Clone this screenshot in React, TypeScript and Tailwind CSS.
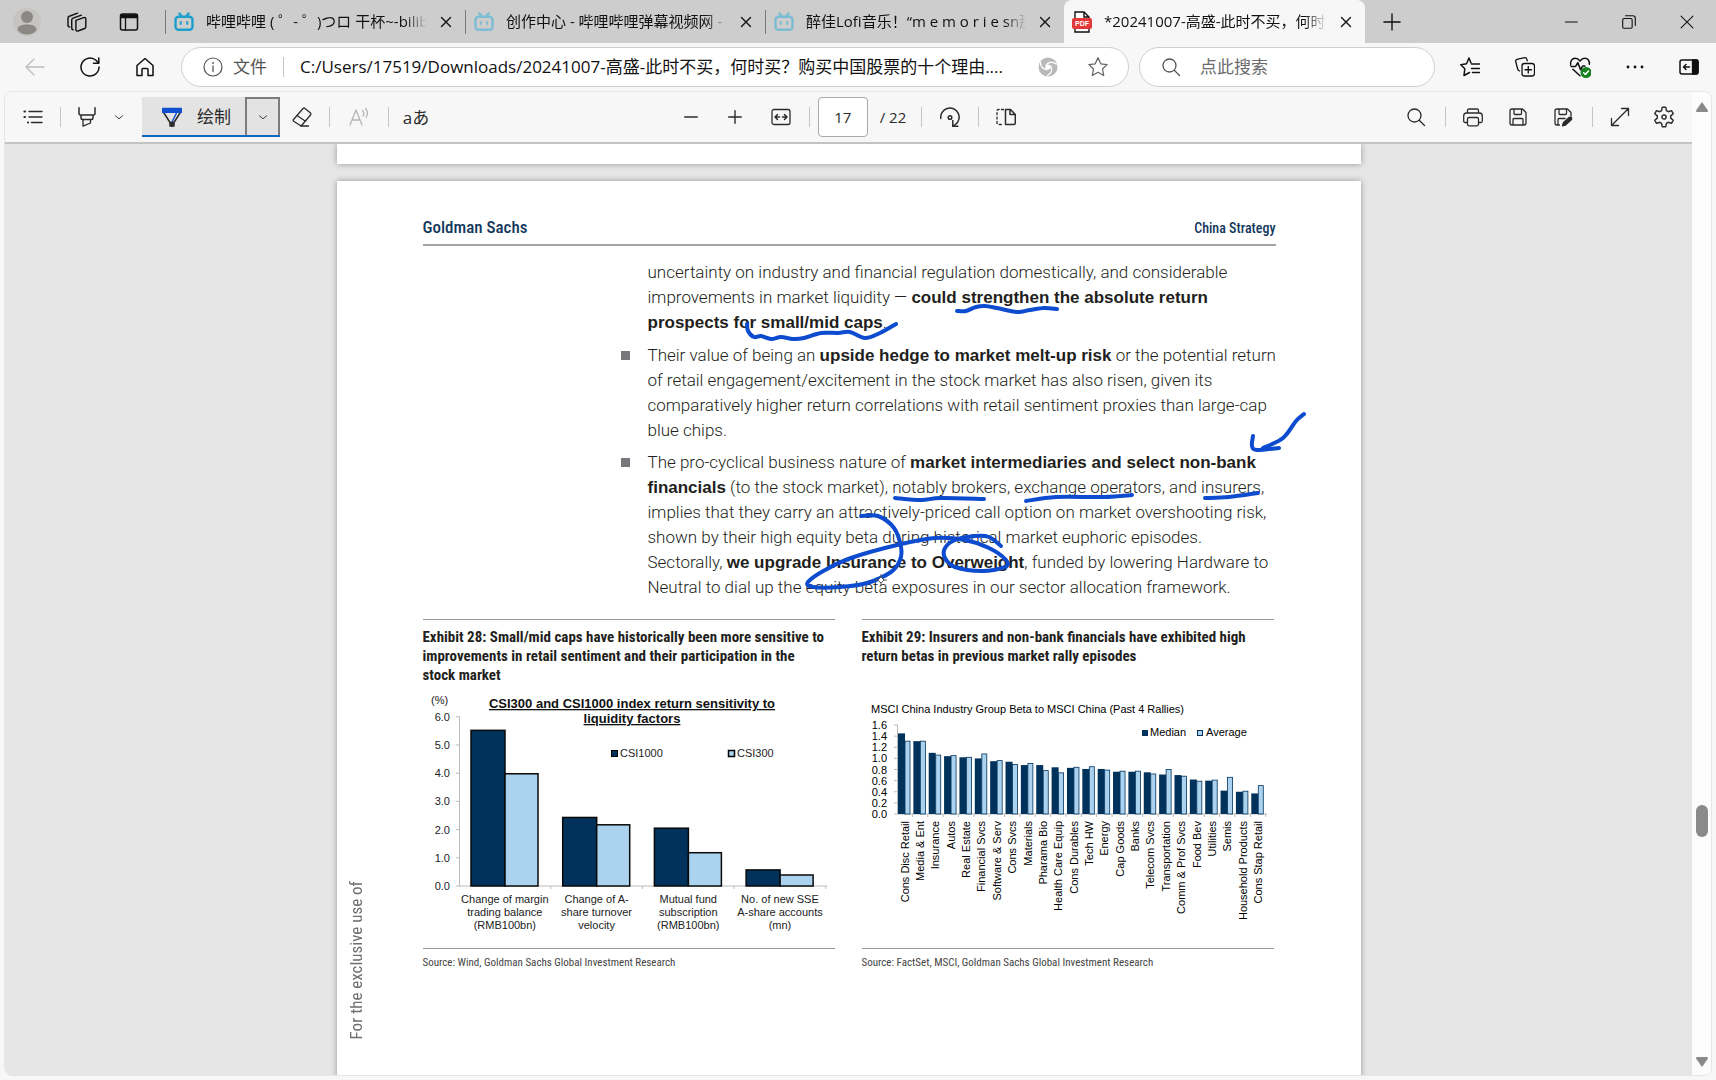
import { type ReactNode } from "react";

type IconProps = { children: ReactNode; className?: string };

function Icon({ children, className = "size-5" }: IconProps) {
  return (
    <svg
      viewBox="0 0 20 20"
      fill="none"
      stroke="currentColor"
      strokeWidth="1.3"
      strokeLinecap="round"
      strokeLinejoin="round"
      aria-hidden="true"
      className={`shrink-0 ${className}`}
    >
      {children}
    </svg>
  );
}

type ToolButtonProps = { label: string; className?: string; children: ReactNode };

function ToolButton({ label, className = "w-10", children }: ToolButtonProps) {
  return (
    <button
      type="button"
      aria-label={label}
      className={`flex h-10 shrink-0 items-center justify-center ${className}`}
    >
      {children}
    </button>
  );
}

function Divider() {
  return <span className="mx-[7px] h-5 w-px shrink-0 bg-[#c4c4c4]" />;
}

const closeGlyph = <path d="M5 5l10 10M15 5L5 15" strokeWidth="1.500" />;
const searchGlyph = (
  <>
    <circle cx="8.5" cy="8.5" r="6.5" />
    <path d="M13.500 13.500l5 5" />
  </>
);
const chevronGlyph = <path d="M4 8l6 5 6-5" strokeWidth="1.500" />;

/* ---------- Tab strip ---------- */

function BiliIcon({ faded }: { faded?: boolean }) {
  return (
    <Icon className={faded ? "size-5 text-[#7dbdd3]" : "size-5 text-[#1d9fcb]"}>
      <rect x="1.5" y="4.8" width="17" height="13" rx="3" strokeWidth="2.4" />
      <path d="M5.5 1.5l2 2.800M14.5 1.5l-2 2.800" strokeWidth="2.4" />
      <path d="M6.800 10v2M13.200 10v2" strokeWidth="2" />
    </Icon>
  );
}

function PdfIcon() {
  return (
    <svg viewBox="0 0 20 22" aria-hidden="true" className="h-[22px] w-5 shrink-0">
      <path d="M3 7V1h9l5 5v2M12 1v5h5M3 17v4h14v-4" fill="#fff" stroke="#111" strokeWidth="1.4" />
      <rect x="0" y="7" width="20" height="11" rx="2" fill="#e5383b" />
      <text
        x="10"
        y="15"
        textAnchor="middle"
        fill="#fff"
        fontSize="7"
        fontWeight="700"
        fontFamily="Liberation Sans, sans-serif"
      >
        PDF
      </text>
    </svg>
  );
}

const backgroundTabs = [
  { title: "哔哩哔哩 ( ゜- ゜)つロ 干杯~-bilibili", faded: false },
  { title: "创作中心 - 哔哩哔哩弹幕视频网 - ( ゜- ゜)つ", faded: true },
  { title: "醉佳Lofi音乐！“m e m o r i e sn那些年", faded: true },
];

const titleFade =
  "min-w-0 flex-1 overflow-hidden whitespace-nowrap text-[15px] [mask-image:linear-gradient(to_right,black_90%,transparent)]";

function TabStrip() {
  return (
    <div className="flex h-[43px] shrink-0 items-center bg-[#cdcdcd]">
      <div className="flex w-[165px] shrink-0 items-center">
        <button type="button" aria-label="个人资料" className="ml-[13px] size-7 overflow-hidden rounded-full bg-[#c6c4c1]">
          <svg viewBox="0 0 28 28" aria-hidden="true">
            <circle cx="14" cy="9" r="6" fill="#8b8885" />
            <path d="M4.500 22c0-4 4-5.500 9.500-5.500s9.500 1.500 9.500 5.500c-2 3-5.500 4.500-9.500 4.500s-7.500-1.500-9.500-4.500z" fill="#8b8885" />
          </svg>
        </button>
        <ToolButton label="工作区" className="ml-4 w-10">
          <Icon className="size-[22px]">
            <path d="M9 8.500l7-2.500c1-.3 2 .2 2 1.300v7c0 .8-.4 1.300-1.100 1.600l-6 2.300c-1 .3-1.900-.2-1.900-1.200z" />
            <path d="M6.500 17c-.8 0-1.300-.6-1.300-1.400V8.300c0-.9.4-1.500 1.200-1.800L14 3.800" />
            <path d="M3.300 14.500c-.9 0-1.500-.6-1.500-1.500V6.500c0-.9.5-1.400 1.200-1.700L10.500 2" />
          </Icon>
        </ToolButton>
        <ToolButton label="标签页操作" className="ml-3 w-10">
          <Icon>
            <rect x="1.500" y="2" width="17" height="16" rx="2" strokeWidth="1.500" />
            <path d="M2 3h16v2.500H2z" fill="currentColor" strokeWidth="1.500" />
            <path d="M6.500 6v12" />
          </Icon>
        </ToolButton>
      </div>
      {backgroundTabs.map((tab, i) => (
        <div
          key={tab.title}
          className={`flex min-w-0 items-center pl-2 ${i === 2 ? "w-[299px]" : "w-[300px]"}`}
        >
          <span className="-ml-2 mr-2 h-6 w-px shrink-0 bg-[#7a7a7a]" />
          <BiliIcon faded={tab.faded} />
          <span className={`ml-3 ${titleFade}`}>{tab.title}</span>
          <button type="button" aria-label="关闭标签页" className="mx-[7px] flex size-6 items-center justify-center">
            <Icon className="size-[18px]">{closeGlyph}</Icon>
          </button>
        </div>
      ))}
      <div className="flex h-full w-[301px] min-w-0 items-center rounded-t-lg bg-[#f7f7f7] pl-2">
        <PdfIcon />
        <span className={`ml-3 ${titleFade}`}>*20241007-高盛-此时不买，何时买？购买</span>
        <button type="button" aria-label="关闭标签页" className="mx-[7px] flex size-6 items-center justify-center">
          <Icon className="size-[18px]">{closeGlyph}</Icon>
        </button>
      </div>
      <ToolButton label="新建标签页" className="ml-[7px] w-10">
        <Icon className="size-[18px]">
          <path d="M10 1v18M1 10h18" strokeWidth="1.500" />
        </Icon>
      </ToolButton>
      <div className="ml-auto flex">
        <ToolButton label="最小化" className="w-[58px]">
          <Icon className="size-3.5">
            <path d="M2 10h17" strokeWidth="1.500" />
          </Icon>
        </ToolButton>
        <ToolButton label="还原" className="w-[58px]">
          <Icon className="size-3.5">
            <rect x="1" y="5" width="13.5" height="14" rx="2" strokeWidth="1.600" />
            <path d="M5 1h10.500c2 0 3.500 1.500 3.500 3.500V15" strokeWidth="1.600" />
          </Icon>
        </ToolButton>
        <ToolButton label="关闭" className="w-[58px]">
          <Icon className="size-3.5">
            <path d="M1.500 1.500l17 17M18.500 1.500l-17 17" strokeWidth="1.500" />
          </Icon>
        </ToolButton>
      </div>
    </div>
  );
}

/* ---------- Address row ---------- */

function AddressRow() {
  return (
    <div className="flex h-12 shrink-0 items-center pl-2">
      <ToolButton label="返回" className="w-[53px] text-[#bdbdbd]">
        <Icon>
          <path d="M19 10H1.500M9 2L1 10l8 8" />
        </Icon>
      </ToolButton>
      <ToolButton label="刷新" className="w-[57px]">
        <Icon>
          <path d="M19 10a9 9 0 1 1-3-6.700L18.500 6" strokeWidth="1.500" />
          <path d="M18.800 1v5.200h-5.300" strokeWidth="1.500" />
        </Icon>
      </ToolButton>
      <ToolButton label="主页" className="w-[53px]">
        <Icon>
          <path d="M2 8.500L10 1.500l8 7V18.500h-5v-6c0-.6-.4-1-1-1H8c-.6 0-1 .4-1 1v6H2z" strokeWidth="1.500" />
        </Icon>
      </ToolButton>
      <div className="ml-[10px] flex h-10 min-w-0 flex-1 items-center rounded-full border border-[#cfcfcf] bg-white pl-[21px]">
        <Icon className="size-5 text-[#555]">
          <circle cx="10" cy="10" r="9" strokeWidth="1.200" />
          <path d="M10 9v5.500" />
          <path d="M10 6v.1" strokeWidth="1.800" />
        </Icon>
        <span className="ml-[10px] shrink-0 text-[17px] text-[#555]">文件</span>
        <span className="mx-4 h-5 w-px shrink-0 bg-[#c4c4c4]" />
        <input
          aria-label="地址栏"
          readOnly
          value="C:/Users/17519/Downloads/20241007-高盛-此时不买，何时买？购买中国股票的十个理由...."
          className="min-w-0 flex-1 bg-transparent text-[17px] outline-none"
        />
        <ToolButton label="同步" className="w-[50px]">
          <Icon>
            <circle cx="10" cy="10" r="9.5" fill="#b9b9b9" stroke="none" />
            <circle cx="10" cy="10" r="2.6" fill="#fff" stroke="none" />
            <path d="M8 8.500C9.500 5 14 4 18 7M12.500 9c2.500 3 1 7.500-3 9.500M9 12.500C5 12.500 2 9 2.500 5" stroke="#fff" strokeWidth="1.300" />
          </Icon>
        </ToolButton>
        <ToolButton label="收藏此页" className="mr-[5px] w-[50px] text-[#666]">
          <Icon>
            <path d="M10 .8l2.800 6 6.300.8-4.600 4.400 1.200 6.500-5.700-3.200-5.700 3.200 1.200-6.500L.900 7.600l6.300-.8z" />
          </Icon>
        </ToolButton>
      </div>
      <label className="ml-[10px] flex h-10 w-[296px] min-w-0 items-center rounded-full border border-[#cfcfcf] bg-white pl-[21px] pr-4">
        <Icon className="size-5 text-[#555]">{searchGlyph}</Icon>
        <input
          aria-label="点此搜索"
          placeholder="点此搜索"
          className="ml-[19px] min-w-0 flex-1 bg-transparent text-[17px] outline-none placeholder:text-[#6b6b6b]"
        />
      </label>
      <div className="ml-[7px] flex shrink-0">
        <ToolButton label="收藏夹" className="w-[55px]">
          <Icon>
            <path d="M11 6L9 1 6.500 6.800.8 7.800l4 4L4 18.500l5.500-3" strokeWidth="1.500" />
            <path d="M11.500 7H19.500M11.500 11.500H19.500M12.500 15.500H19.500" strokeWidth="1.500" />
          </Icon>
        </ToolButton>
        <ToolButton label="集锦" className="w-[55px]">
          <Icon>
            <path d="M4.500 14c-1-.3-1.500-.8-1.800-2L.700 4.500c-.2-1 .3-1.900 1.300-2.200L9.500.700c1-.2 1.800.2 2.200 1.200l.6 2" />
            <rect x="7" y="6.500" width="12.500" height="12.500" rx="2.500" />
            <path d="M13.250 9.500v6.500M10 12.750h6.500" />
          </Icon>
        </ToolButton>
        <ToolButton label="浏览器概要" className="w-[55px]">
          <Icon className="size-[22px]">
            <path d="M1.500 8.200C.8 4.500 3 2 5.600 2 7.600 2 9 3.200 10 4.500 11 3.200 12.400 2 14.400 2c2.600 0 4.600 2.300 4.100 5.500M3.500 12l6.500 6" strokeWidth="1.400" />
            <path d="M2 9.500h4l2-3.500 2.500 6.500 2-3.500h2" strokeWidth="1.400" />
            <circle cx="15.5" cy="15" r="5" fill="#16801f" stroke="none" />
            <path d="M13.300 15.200l1.600 1.500 2.800-3" stroke="#fff" strokeWidth="1.400" />
          </Icon>
        </ToolButton>
        <ToolButton label="设置及其他" className="w-[55px]">
          <Icon>
            <path d="M3 10h.01M10 10h.01M17 10h.01" strokeWidth="2.800" />
          </Icon>
        </ToolButton>
        <ToolButton label="边栏" className="w-[54px]">
          <Icon>
            <rect x="1" y="3" width="18" height="14" rx="2" strokeWidth="1.500" />
            <path d="M13.500 3h4c.8 0 1.500.7 1.500 1.500v11c0 .8-.7 1.500-1.500 1.500h-4z" fill="currentColor" />
            <path d="M10.500 10H4.500M7 7.500L4.500 10 7 12.500" strokeWidth="1.500" />
          </Icon>
        </ToolButton>
      </div>
    </div>
  );
}

/* ---------- PDF toolbar ---------- */

function PdfToolbar() {
  return (
    <div className="grid h-[52px] shrink-0 grid-cols-[1fr_auto_1fr] items-center border-b-2 border-[#c3c3c3] bg-[#f7f7f7] text-[#2b2b2b]">
      <div className="flex items-center pl-2">
        <ToolButton label="目录">
          <Icon>
            <path d="M6 4.500h13M6 10h13M8.500 15.500H19" strokeWidth="1.400" />
            <path d="M1.500 4.500h.5M1.500 10h.5M5 15.500h.01" strokeWidth="2.200" />
          </Icon>
        </ToolButton>
        <Divider />
        <ToolButton label="突出显示" className="w-[38px]">
          <Icon>
            <path d="M2 .8v5.700c0 .8.500 1.500 1.500 1.500h13c1 0 1.500-.7 1.500-1.500V.800M4 8v3c0 1 .6 1.500 1.500 1.500h9c.9 0 1.500-.5 1.500-1.500V8" strokeWidth="1.500" />
            <path d="M6 12.500v6.700l7.500-3.200v-3.500" />
          </Icon>
        </ToolButton>
        <ToolButton label="突出显示选项" className="mr-[10px] w-[26px]">
          <Icon className="size-3">{chevronGlyph}</Icon>
        </ToolButton>
        <div className="flex h-10 border-b-2 border-[#1267c4] bg-[#e3e3e3]">
          <button type="button" aria-pressed="true" className="flex w-[103px] items-center gap-[15px] pl-5 pt-0.5 text-[17px]">
            <Icon className="size-5">
              <path d="M2 6l6 9.500V19h4v-3.500L18 6" strokeWidth="1.500" />
              <path d="M0 .8h20V6H0z" fill="#0f4fd0" stroke="none" />
              <path d="M14.500 6l-4.500 9" stroke="#0f4fd0" strokeWidth="1.500" />
              <path d="M8 15.500h4L10 19.500z" fill="#222" />
            </Icon>
            绘制
          </button>
          <button
            type="button"
            aria-label="绘制选项"
            className="flex w-[35px] items-center justify-center border-2 border-b-0 border-[#7c7c7c]"
          >
            <Icon className="size-3">{chevronGlyph}</Icon>
          </button>
        </div>
        <ToolButton label="擦除" className="ml-[2px] w-10">
          <Icon>
            <path d="M1.500 12.500L11 1.500c.6-.6 1.400-.6 2 0l5.500 4.500c.6.6.6 1.400 0 2L10 18c-.7.7-1.700.7-2.400 0l-6-3.700c-.6-.6-.6-1.200-.1-1.800zM5 8.500l8.500 5.700M8.500 19h8" />
          </Icon>
        </ToolButton>
        <Divider />
        <ToolButton label="大声朗读" className="w-11 text-[#b5b5b5]">
          <Icon>
            <path d="M1 18L7 3l6 15M3 13h8M13.500 3.500c1.500 1.500 1.500 4 .5 5.500M16.500 1.500c2.500 2.500 2.500 6 .5 9" />
          </Icon>
        </ToolButton>
        <Divider />
        <button type="button" className="h-10 w-10 text-[17px] leading-none">
          aあ
        </button>
      </div>
      <div className="flex items-center pr-[2px]">
        <ToolButton label="缩小" className="w-11">
          <Icon className="size-3.5">
            <path d="M1 10h18" strokeWidth="2" />
          </Icon>
        </ToolButton>
        <ToolButton label="放大" className="w-11">
          <Icon className="size-3.5">
            <path d="M1 10h18M10 1v18" strokeWidth="2" />
          </Icon>
        </ToolButton>
        <ToolButton label="适应宽度" className="w-12">
          <Icon>
            <rect x="1" y="2.5" width="18" height="15" rx="2" />
            <path d="M4 10h4.500M11.500 10H16M6.500 7.500L4 10l2.500 2.500M13.500 7.500L16 10l-2.500 2.500" strokeWidth="1.500" />
          </Icon>
        </ToolButton>
        <span className="ml-1 mr-2 h-5 w-px shrink-0 bg-[#c4c4c4]" />
        <input
          aria-label="页码"
          defaultValue="17"
          className="h-10 w-[50px] rounded-sm border border-[#a9a9a9] bg-white text-center text-[15px] outline-none"
        />
        <span className="ml-3 mr-2 whitespace-nowrap text-[15px]">/ 22</span>
        <Divider />
        <ToolButton label="旋转" className="w-[42px]">
          <Icon>
            <path d="M.800 11.500a9.200 9.200 0 1 1 14.500 6.200L12.800 19.200" strokeWidth="1.500" />
            <path d="M12.800 13.500v5.800h5" strokeWidth="1.500" />
            <circle cx="10" cy="10.500" r="1.800" strokeWidth="1.500" />
          </Icon>
        </ToolButton>
        <Divider />
        <ToolButton label="页面视图" className="w-10">
          <Icon>
            <path d="M9.500 2.500h5l4.800 5V16c0 .8-.6 1.500-1.500 1.500H9.500zM14 2.500v5h5" strokeWidth="1.500" />
            <path d="M7.500 2.500H2.500c-1 0-1.500.7-1.500 1.500v12c0 .8.500 1.500 1.500 1.500h5" strokeDasharray="2 2.4" />
          </Icon>
        </ToolButton>
      </div>
      <div className="flex items-center justify-end pr-2">
        <ToolButton label="查找" className="w-11">
          <Icon>{searchGlyph}</Icon>
        </ToolButton>
        <Divider />
        <ToolButton label="打印">
          <Icon>
            <path d="M4.500 6V3.500C4.500 2.500 5.100 2 6 2h8c.9 0 1.500.6 1.500 1.500V6M4 15.500H2.200C1.200 15.500.700 15 .700 14V9C.700 7.200 1.900 6 3.500 6h13c1.600 0 2.800 1.200 2.800 3v5c0 1-.5 1.500-1.500 1.500H16" />
            <rect x="4.500" y="10.5" width="11" height="8.300" rx="1.500" />
          </Icon>
        </ToolButton>
        <ToolButton label="保存" className="w-[50px]">
          <Icon>
            <path d="M2 4c0-1.200.8-2 2-2h10.500L18 5.500V16c0 1.200-.8 2-2 2H4c-1.200 0-2-.8-2-2zM6 2v4.500c0 .6.400 1 1 1h5.500c.6 0 1-.4 1-1V2M5 18v-5.500c0-.6.400-1 1-1h8c.6 0 1 .4 1 1V18" />
          </Icon>
        </ToolButton>
        <ToolButton label="另存为" className="mr-[2px] w-10">
          <Icon>
            <path d="M6.500 18H4c-1.200 0-2-.8-2-2V4c0-1.200.8-2 2-2h10.500L18 5.500V9M6 2v4.500c0 .6.400 1 1 1h5.500c.6 0 1-.4 1-1V2M5 18v-5.500c0-.6.400-1 1-1h6" />
            <path d="M9.500 18.800l.8-3 6-5.500c1.500-.8 3 .6 2.200 2.200l-6 5.500z" fill="currentColor" />
          </Icon>
        </ToolButton>
        <Divider />
        <ToolButton label="全屏">
          <Icon>
            <path d="M1.500 18.500L18.500 1.500M11.500 1.500h7v7M1.500 11.500v7h7" />
          </Icon>
        </ToolButton>
        <ToolButton label="设置" className="ml-1 w-10">
          <Icon className="size-[22px]">
            <path d="M8.400 1.200h3.200l.6 3 1.700 1 2.900-1 1.600 2.800-2.300 2v2l2.300 2-1.600 2.800-2.900-1-1.700 1-.6 3H8.400l-.6-3-1.700-1-2.900 1-1.600-2.800 2.300-2V9l-2.300-2 1.600-2.800 2.900 1 1.700-1z" />
            <circle cx="10" cy="10" r="1.900" />
          </Icon>
        </ToolButton>
      </div>
    </div>
  );
}

/* ---------- Charts ---------- */

const NAVY = "#00325b";
const SKY = "#abd3f0";
const chartFont = "Liberation Sans, Arial, sans-serif";

const liquidityBars = [
  { lines: ["Change of margin", "trading balance", "(RMB100bn)"], csi1000: 5.52, csi300: 3.98 },
  { lines: ["Change of A-", "share turnover", "velocity"], csi1000: 2.43, csi300: 2.17 },
  { lines: ["Mutual fund", "subscription", "(RMB100bn)"], csi1000: 2.05, csi300: 1.18 },
  { lines: ["No. of new SSE", "A-share accounts", "(mn)"], csi1000: 0.57, csi300: 0.39 },
];

function LiquidityChart() {
  const base = 196;
  const unit = 28.2;
  const group = 91.7;
  return (
    <svg viewBox="0 0 412 258" fontFamily={chartFont} fontSize="11" fill="#222" className="mt-[5px] w-full">
      <text x="8" y="14">(%)</text>
      <g fontSize="13" fontWeight="700" textAnchor="middle" textDecoration="underline" fill="#111">
        <text x="209" y="18">CSI300 and CSI1000 index return sensitivity to</text>
        <text x="209" y="33">liquidity factors</text>
      </g>
      <rect x="188.500" y="60.500" width="6" height="6" fill={NAVY} stroke="#000" />
      <text x="197" y="67">CSI1000</text>
      <rect x="305.500" y="60.500" width="6" height="6" fill={SKY} stroke="#000" strokeWidth="1.500" />
      <text x="314" y="67">CSI300</text>
      <path d="M36.500 27v169H404" fill="none" stroke="#bbb" />
      {[0, 1, 2, 3, 4, 5, 6].map((n) => (
        <g key={n}>
          <path d={`M33 ${base - n * unit}h4`} stroke="#bbb" />
          <text x="27" y={base - n * unit + 4} textAnchor="end">{n}.0</text>
        </g>
      ))}
      {liquidityBars.map((bar, i) => {
        const left = 36 + i * group;
        return (
          <g key={bar.lines[0]} stroke="#0a0a0a">
            <rect x={left + 12} y={base - bar.csi1000 * unit} width="34" height={bar.csi1000 * unit} fill={NAVY} strokeWidth="1.500" />
            <rect x={left + 46} y={base - bar.csi300 * unit} width="33" height={bar.csi300 * unit} fill={SKY} strokeWidth="1.500" />
            <path d={`M${left + group} ${base}v3`} stroke="#bbb" />
            {bar.lines.map((line, n) => (
              <text key={line} x={left + group / 2} y={213 + n * 13} textAnchor="middle" stroke="none">
                {line}
              </text>
            ))}
          </g>
        );
      })}
    </svg>
  );
}

const betaBars: [string, number, number][] = [
  ["Cons Disc Retail", 1.45, 1.31],
  ["Media & Ent", 1.31, 1.31],
  ["Insurance", 1.1, 1.06],
  ["Autos", 1.04, 1.05],
  ["Real Estate", 1.02, 1.02],
  ["Financial Svcs", 1.0, 1.08],
  ["Software & Serv", 0.95, 0.96],
  ["Cons Svcs", 0.94, 0.89],
  ["Materials", 0.88, 0.91],
  ["Pharama Bio", 0.88, 0.78],
  ["Health Care Equip", 0.84, 0.74],
  ["Cons Durables", 0.83, 0.84],
  ["Tech HW", 0.81, 0.85],
  ["Energy", 0.81, 0.79],
  ["Cap Goods", 0.76, 0.77],
  ["Banks", 0.76, 0.77],
  ["Telecom Svcs", 0.75, 0.72],
  ["Transportation", 0.71, 0.8],
  ["Comm & Prof Svcs", 0.7, 0.68],
  ["Food Bev", 0.62, 0.59],
  ["Utilities", 0.6, 0.61],
  ["Semis", 0.42, 0.66],
  ["Household Products", 0.4, 0.41],
  ["Cons Stap Retail", 0.37, 0.51],
];

function BetaChart() {
  const base = 124;
  const unit = 55.6;
  const step = 15.36;
  return (
    <svg viewBox="0 0 412 258" fontFamily={chartFont} fontSize="11" fill="#000" className="mt-[5px] w-full">
      <text x="9" y="23">MSCI China Industry Group Beta to MSCI China (Past 4 Rallies)</text>
      <rect x="280" y="40" width="6" height="6" fill={NAVY} />
      <text x="288" y="46">Median</text>
      <rect x="335.500" y="40.500" width="5" height="5" fill={SKY} stroke={NAVY} />
      <text x="344" y="46">Average</text>
      <path d="M35.500 35v89H405" fill="none" stroke="#bbb" />
      {[0, 0.2, 0.4, 0.6, 0.8, 1, 1.2, 1.4, 1.6].map((v) => (
        <g key={v}>
          <path d={`M32 ${base - v * unit}h4`} stroke="#bbb" />
          <text x="25" y={base - v * unit + 4} textAnchor="end">{v.toFixed(1)}</text>
        </g>
      ))}
      {betaBars.map(([name, median, average], i) => {
        const left = 35 + i * step;
        const mid = left + step / 2;
        return (
          <g key={name}>
            <rect x={left + 1} y={base - median * unit} width="7" height={median * unit} fill={NAVY} />
            <rect x={left + 8} y={base - average * unit} width="5" height={average * unit} fill={SKY} stroke={NAVY} strokeWidth=".8" />
            <path d={`M${left + step} ${base}v3`} stroke="#bbb" />
            <text transform={`translate(${mid + 4} 131) rotate(-90)`} textAnchor="end">{name}</text>
          </g>
        );
      })}
    </svg>
  );
}

/* ---------- Ink annotations ---------- */

type Point = [number, number];

const strokes: Point[][] = [
  [[622, 130], [631, 130], [641, 126], [650, 125], [662, 127], [682, 131], [695, 129], [709, 127], [722, 128]],
  [[412, 143], [413, 150], [419, 156], [426, 155], [436, 158], [446, 156], [458, 158], [469, 157], [486, 152], [503, 152], [515, 151], [530, 157], [545, 152], [561, 143]],
  [[969, 233], [961, 240], [948, 257], [928, 267]],
  [[918, 255], [917, 265], [922, 269], [944, 267]],
  [[560, 317], [586, 319], [606, 317], [649, 318]],
  [[691, 320], [721, 316], [769, 316], [797, 314]],
  [[870, 317], [894, 316], [923, 312]],
  [
    [526, 335], [543, 335], [559, 347], [566, 366], [565, 379], [556, 391], [532, 402], [505, 406], [478, 406],
    [473, 401], [490, 389], [516, 377], [562, 364], [600, 357], [630, 359], [654, 367], [671, 379], [670, 386],
    [647, 390], [620, 386], [610, 377], [610, 367], [620, 359], [640, 355], [654, 356], [666, 365],
  ],
];

// Catmull-Rom through every point, written out as cubic segments
function smooth(points: Point[]) {
  let d = `M${points[0][0]} ${points[0][1]}`;
  for (let i = 0; i < points.length - 1; i++) {
    const p0 = points[i - 1] ?? points[i];
    const p1 = points[i];
    const p2 = points[i + 1];
    const p3 = points[i + 2] ?? p2;
    d += `C${p1[0] + (p2[0] - p0[0]) / 6} ${p1[1] + (p2[1] - p0[1]) / 6} ${p2[0] - (p3[0] - p1[0]) / 6} ${p2[1] - (p3[1] - p1[1]) / 6} ${p2[0]} ${p2[1]}`;
  }
  return d;
}

function InkLayer() {
  return (
    <svg viewBox="2 0 1024 500" aria-hidden="true" className="pointer-events-none absolute inset-x-0 top-0 w-full">
      <g fill="none" stroke="#0d4bcf" strokeWidth="4" strokeLinecap="round" strokeLinejoin="round">
        {strokes.map((points, i) => (
          <path key={i} d={smooth(points)} />
        ))}
      </g>
      <path d="M546 393v3M546 402v3M540 399h3M549 399h3M546 396l3 3-3 3-3-3z" stroke="#555" fill="#fff" />
    </svg>
  );
}

/* ---------- Document ---------- */

const condensed = "font-['Liberation_Sans_Narrow','Roboto_Condensed','Liberation_Sans',sans-serif]";

type ExhibitProps = { title: ReactNode; source: string; children: ReactNode };

function Exhibit({ title, source, children }: ExhibitProps) {
  return (
    <figure className="border-t border-[#999]">
      <h3 className={`mt-2 h-[57px] whitespace-nowrap text-[15px] leading-[19px] font-bold text-[#231f20] ${condensed}`}>
        {title}
      </h3>
      {children}
      <figcaption className={`border-t border-[#999] pt-[6px] text-[11px] leading-4 text-[#444] ${condensed}`}>
        {source}
      </figcaption>
    </figure>
  );
}

function Bullet({ children }: { children: ReactNode }) {
  return (
    <li className="flex gap-[18px]">
      <span className="mt-2 size-[9px] shrink-0 bg-[#77787b]" />
      <p>{children}</p>
    </li>
  );
}

function Strong({ children }: { children: ReactNode }) {
  return <strong className="font-['Liberation_Sans',sans-serif] font-bold">{children}</strong>;
}

function ReportPage() {
  return (
    <article className="relative mt-[17px] flex min-h-[1325px] w-full max-w-[1024px] shrink-0 bg-white shadow-[0_0_6px_rgba(0,0,0,0.35)]">
      <div className="flex h-[858px] w-[86px] shrink-0 items-end pl-[7px]">
        <span className={`rotate-180 whitespace-nowrap text-[17px] leading-6 text-[#6d6e71] [writing-mode:vertical-rl] ${condensed}`}>
          For the exclusive use of
        </span>
      </div>
      <div className="mr-[85px] min-w-0 flex-1">
        <header className={`mt-[31px] flex h-[34px] items-baseline justify-between border-b-2 border-[#a3a3a3] font-medium text-[#12385c] ${condensed}`}>
          <span className="text-[17px] leading-[30px]">Goldman Sachs</span>
          <span className="text-[14px]">China Strategy</span>
        </header>
        <div className="mt-[14px] whitespace-nowrap font-['Roboto','Liberation_Sans',sans-serif] text-[17px] leading-[25px] font-light text-[#231f20]">
          <p className="ml-[225px]">
            uncertainty on industry and financial regulation domestically, and considerable
            <br />
            improvements in market liquidity — <Strong>could strengthen the absolute return</Strong>
            <br />
            <Strong>prospects for small/mid caps</Strong>.
          </p>
          <ul className="mt-2 ml-[198px] flex flex-col gap-[7px]">
            <Bullet>
              Their value of being an <Strong>upside hedge to market melt-up risk</Strong> or the potential return
              <br />
              of retail engagement/excitement in the stock market has also risen, given its
              <br />
              comparatively higher return correlations with retail sentiment proxies than large-cap
              <br />
              blue chips.
            </Bullet>
            <Bullet>
              The pro-cyclical business nature of <Strong>market intermediaries and select non-bank</Strong>
              <br />
              <Strong>financials</Strong> (to the stock market), notably brokers, exchange operators, and insurers,
              <br />
              implies that they carry an attractively-priced call option on market overshooting risk,
              <br />
              shown by their high equity beta during historical market euphoric episodes.
              <br />
              Sectorally, <Strong>we upgrade Insurance to Overweight</Strong>, funded by lowering Hardware to
              <br />
              Neutral to dial up the equity beta exposures in our sector allocation framework.
            </Bullet>
          </ul>
        </div>
        <div className="mt-[19px] grid grid-cols-2 gap-[27px] pr-[2px]">
          <Exhibit
            title={
              <>
                Exhibit 28: Small/mid caps have historically been more sensitive to
                <br />
                improvements in retail sentiment and their participation in the
                <br />
                stock market
              </>
            }
            source="Source: Wind, Goldman Sachs Global Investment Research"
          >
            <LiquidityChart />
          </Exhibit>
          <Exhibit
            title={
              <>
                Exhibit 29: Insurers and non-bank financials have exhibited high
                <br />
                return betas in previous market rally episodes
              </>
            }
            source="Source: FactSet, MSCI, Goldman Sachs Global Investment Research"
          >
            <BetaChart />
          </Exhibit>
        </div>
      </div>
      <InkLayer />
    </article>
  );
}

function ScrollBar() {
  return (
    <div className="flex w-[19px] shrink-0 flex-col items-center bg-[#fcfcfc] pt-[10px] pb-2">
      <svg viewBox="0 0 12 10" aria-hidden="true" className="h-[10px] w-3">
        <path d="M6 0l6 8.500c0 1-.5 1.500-1.500 1.500h-9C.5 10 0 9.500 0 8.500z" fill="#8a8a8a" />
      </svg>
      <span className="flex-[692]" />
      <span className="h-8 w-3 rounded-full bg-[#8a8a8a]" />
      <span className="flex-[220]" />
      <svg viewBox="0 0 12 10" aria-hidden="true" className="h-[10px] w-3 rotate-180">
        <path d="M6 0l6 8.500c0 1-.5 1.500-1.500 1.500h-9C.5 10 0 9.500 0 8.500z" fill="#8a8a8a" />
      </svg>
    </div>
  );
}

export default function App() {
  return (
    <div className="flex h-screen flex-col overflow-hidden bg-[#f7f7f7] font-['Open_Sans','Noto_Sans_CJK_SC',sans-serif] text-[#111]">
      <TabStrip />
      <AddressRow />
      <div className="mx-1 mb-1 flex min-h-0 flex-1 overflow-hidden rounded-lg border border-[#e6e6e6]">
        <div className="flex min-w-0 flex-1 flex-col">
          <PdfToolbar />
          <main className="flex min-h-0 flex-1 flex-col items-center overflow-hidden bg-[#e6e6e6]">
            <div className="h-5 w-full max-w-[1024px] shrink-0 bg-white shadow-[0_0_6px_rgba(0,0,0,0.35)]" />
            <ReportPage />
          </main>
        </div>
        <ScrollBar />
      </div>
    </div>
  );
}
